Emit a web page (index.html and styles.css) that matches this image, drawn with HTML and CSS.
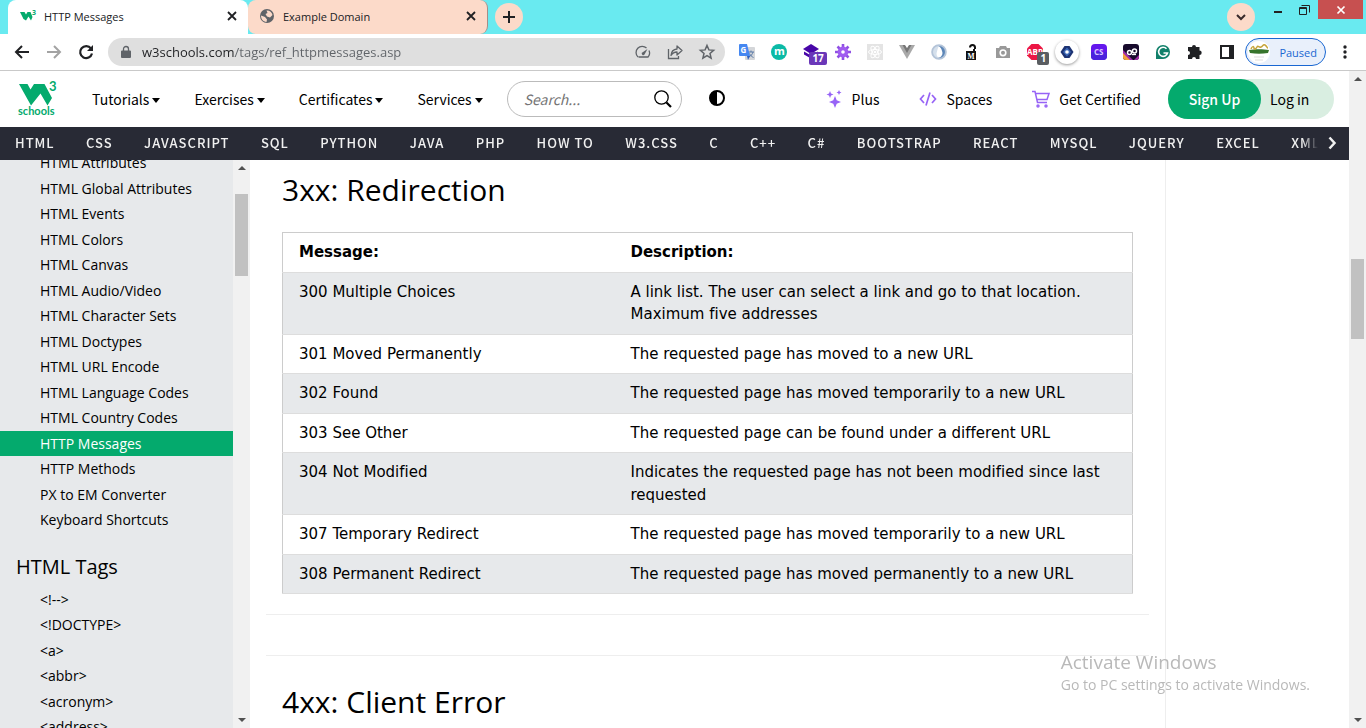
FILE: index.html
```html
<!DOCTYPE html>
<html lang="en">
<head>
<meta charset="utf-8">
<title>HTTP Messages</title>
<link rel="stylesheet" href="styles.css">
</head>
<body>
<div class="tabstrip">
  <div class="tab tab-active">
    <svg class="fav" viewBox="0 0 16 16"><path d="M0 4H4.500L6 6.500 7.500 4H10.500L12.500 9 11 12.500 8.500 8.500 6 12.500 3.500 11Z" fill="#04aa6d"/><text x="12" y="7" font-size="7" font-weight="700" fill="#04aa6d">3</text></svg>
    <span class="tab-title">HTTP Messages</span>
    <button class="icon-btn" aria-label="Close tab"><svg width="10" height="10" viewBox="0 0 10 10"><path d="M1 1l8 8M9 1l-8 8" stroke="#202124" stroke-width="1.800"/></svg></button>
  </div>
  <div class="tab tab-idle">
    <svg class="fav" viewBox="0 0 16 16"><circle cx="8" cy="8" r="7" fill="#5f6368"/><path d="M7.500 2.500C10 2 13 4 13.500 7L11 9.500 8 8.500 6.500 6 8.500 5ZM2 7.500 6 9 8 11.500 7.500 14C4 13.500 2 11 2 7.500Z" fill="#fcdac9"/></svg>
    <span class="tab-title">Example Domain</span>
    <button class="icon-btn" aria-label="Close tab"><svg width="10" height="10" viewBox="0 0 10 10"><path d="M1 1l8 8M9 1l-8 8" stroke="#202124" stroke-width="1.800"/></svg></button>
  </div>
  <button class="round-btn" aria-label="New tab"><svg width="12" height="12" viewBox="0 0 12 12"><path d="M6 0v12M0 6h12" stroke="#202124" stroke-width="2"/></svg></button>
  <button class="round-btn search-tabs" aria-label="Search tabs"><svg width="10" height="7" viewBox="0 0 10 7"><path d="M1 1l4 4 4-4" fill="none" stroke="#3a2a2a" stroke-width="2"/></svg></button>
  <div class="win-btns">
    <button class="win-btn" aria-label="Minimize"><svg width="8" height="12" viewBox="0 0 8 12"><path d="M0 8h8" stroke="#222" stroke-width="2"/></svg></button>
    <button class="win-btn" aria-label="Restore"><svg width="11" height="10" viewBox="0 0 11 10"><path d="M.5 2.500h7v7h-7zM.5 3.500h7M2.500 .5h8v7" fill="none" stroke="#222"/></svg></button>
    <button class="win-btn win-close" aria-label="Close"><svg width="8" height="8" viewBox="0 0 8 8"><path d="M.5 .5l7 7M7.500 .5l-7 7" stroke="#fff" stroke-width="1.700"/></svg></button>
  </div>
</div>

<div class="toolbar">
  <div class="nav-btns">
    <button class="icon-btn" aria-label="Back"><svg width="16" height="16" viewBox="0 0 16 16"><path d="M15 8H2M8 2L2 8l6 6" fill="none" stroke="#202124" stroke-width="2"/></svg></button>
    <button class="icon-btn" aria-label="Forward"><svg width="16" height="16" viewBox="0 0 16 16"><path d="M1 8h13M8 2l6 6-6 6" fill="none" stroke="#a3a3a3" stroke-width="2"/></svg></button>
    <button class="icon-btn" aria-label="Reload"><svg width="16" height="16" viewBox="0 0 16 16"><path d="M13 4.500A6 6 0 1 0 14 9.500" fill="none" stroke="#202124" stroke-width="2.200"/><path d="M15 1v6H9z" fill="#202124"/></svg></button>
  </div>
  <div class="omnibox">
    <svg width="10" height="12" viewBox="0 0 10 12"><path d="M1 4.500h8a1 1 0 0 1 1 1V11a1 1 0 0 1-1 1H1a1 1 0 0 1-1-1V5.500a1 1 0 0 1 1-1z" fill="#5f6368"/><path d="M2.500 5V3a2.500 2.500 0 0 1 5 0v2" fill="none" stroke="#5f6368" stroke-width="1.300"/></svg>
    <input class="url" type="text" aria-label="Address" value="w3schools.com/tags/ref_httpmessages.asp">
    <div class="omni-icons">
      <button class="icon-btn" aria-label="Performance"><svg width="16" height="16" viewBox="0 0 16 16"><path d="M3.500 13h9.500A6 6 0 0 0 14 6.500M11.500 4A6 6 0 0 0 3 13" fill="none" stroke="#5f6368" stroke-width="1.300"/><path d="M12.500 5L9.500 10.500A1.500 1.500 0 1 1 7.300 8.500z" fill="#5f6368"/></svg></button>
      <button class="icon-btn" aria-label="Share"><svg width="16" height="16" viewBox="0 0 16 16"><path d="M1.500 5v9.500h10V12" fill="none" stroke="#5f6368" stroke-width="1.300"/><path d="M10 5V2l5 4.500L10 11V8C7 8 5.500 9 4 11.500 4.300 7.500 6.500 5.300 10 5z" fill="none" stroke="#5f6368" stroke-width="1.300" stroke-linejoin="round"/></svg></button>
      <button class="icon-btn" aria-label="Bookmark"><svg width="16" height="16" viewBox="0 0 16 16"><path d="M8 1.500l1.900 4.400 4.700.4-3.600 3.100 1.100 4.700L8 11.600 3.900 14.100 5 9.400 1.400 6.300l4.700-.4z" fill="none" stroke="#5f6368" stroke-width="1.500"/></svg></button>
    </div>
  </div>
  <div class="extensions">
    <button class="icon-btn" aria-label="Translate"><svg width="16" height="16" viewBox="0 0 16 16"><rect x="6" y="3" width="10" height="13" rx="1" fill="#d4d6d9"/><path d="M9 8h6M12 6.500V8M14 8c-.5 2-2 4-4 5M10.500 9.500c1 2 2 3 4 4" stroke="#5b7aa8" fill="none"/><path d="M1 0h7l3 12H1a1 1 0 0 1-1-1V1a1 1 0 0 1 1-1z" fill="#4688f1"/><path d="M8 12h3l-2 4z" fill="#2b5fc0"/><text x="1.500" y="9" font-size="8" font-weight="700" fill="#fff">G</text></svg></button>
    <button class="icon-btn" aria-label="Mate"><svg width="16" height="16" viewBox="0 0 16 16"><circle cx="8" cy="8" r="8" fill="#0bbaa6"/><text x="3" y="11" font-size="11" font-weight="700" fill="#fff">m</text></svg></button>
    <button class="icon-btn badge-host" aria-label="Layers, 17"><svg width="16" height="16" viewBox="0 0 16 16"><path d="M8 0l8 5-8 5-8-5z" fill="#4806a8"/><path d="M1 7.500l7 4 7-4v3l-7 4-7-4z" fill="#4806a8"/></svg><span class="badge badge-purple">17</span></button>
    <button class="icon-btn" aria-label="Gear"><svg width="16" height="16" viewBox="0 0 16 16"><path d="M8 0v16M0 8h16M2.500 2.500l11 11M13.500 2.500l-11 11" stroke="#9050e4" stroke-width="2.600"/><circle cx="8" cy="8" r="3.600" fill="#fff" stroke="#a05cf0" stroke-width="3.600"/></svg></button>
    <button class="icon-btn" aria-label="React"><svg width="16" height="16" viewBox="0 0 16 16"><rect width="16" height="16" fill="#e4e4e4"/><g fill="none" stroke="#fff"><ellipse cx="8" cy="8" rx="6.500" ry="2.500"/><ellipse cx="8" cy="8" rx="6.500" ry="2.500" transform="rotate(60 8 8)"/><ellipse cx="8" cy="8" rx="6.500" ry="2.500" transform="rotate(120 8 8)"/></g><circle cx="8" cy="8" r="1.300" fill="#fff"/></svg></button>
    <button class="icon-btn" aria-label="Vue"><svg width="16" height="16" viewBox="0 0 16 16"><path d="M0 1h16L8 15z" fill="#a9a9a9"/><path d="M3.500 1h3L8 4l1.500-3h3L8 9z" fill="#777"/><path d="M6 1h4L8 4z" fill="#fff"/></svg></button>
    <button class="icon-btn" aria-label="Orbit"><svg width="16" height="16" viewBox="0 0 16 16"><circle cx="8" cy="8" r="6.500" fill="none" stroke="#b4c4d8" stroke-width="2.600"/><path d="M8 2a6 6 0 0 1 0 12c3.500-2 4-4.500 3-7C10.500 5 9.500 3.500 8 2z" fill="#5c86b8"/><path d="M8 2a6 6 0 0 0 0 12c-2.500-1.500-3-4-2-6.500C6.500 5.500 7 3.500 8 2z" fill="#d5e0ec"/></svg></button>
    <button class="icon-btn" aria-label="Unlock"><svg width="16" height="16" viewBox="0 0 16 16"><rect x="3" y="7" width="10" height="9" fill="#111"/><path d="M12 5V3.500a2.500 2.500 0 0 0-5 0M11 8V5" fill="none" stroke="#111" stroke-width="2"/><text class="serif" x="4.500" y="14.500" font-size="7.500" font-weight="700" fill="#fff">M</text></svg></button>
    <button class="icon-btn" aria-label="Camera"><svg width="16" height="16" viewBox="0 0 16 16"><path d="M1 4h3l1-2h6l1 2h3v10H1z" fill="#999"/><circle cx="8" cy="8.800" r="2.800" fill="none" stroke="#fff" stroke-width="1.600"/></svg></button>
    <button class="icon-btn badge-host" aria-label="Ad blocker, 1"><svg width="16" height="16" viewBox="0 0 16 16"><path d="M4.500 0h7L16 4.500v7L11.500 16h-7L0 11.500v-7z" fill="#ec1745"/><text x="0" y="11" font-size="8" font-weight="700" fill="#fff">ABP</text></svg><span class="badge badge-gray">1</span></button>
    <button class="icon-btn disc" aria-label="Wallet"><svg width="14" height="14" viewBox="0 0 14 14"><path d="M4.500 1h5L13.500 7l-4 6h-5L.5 7z" fill="#1d3373"/><path d="M7 2.500l4 4.500-4 4.500L3 7z" fill="#3b68b8"/><circle cx="7" cy="7" r="1.800" fill="#fff"/></svg></button>
    <button class="icon-btn" aria-label="CS"><svg width="16" height="16" viewBox="0 0 16 16"><rect width="16" height="16" rx="4" fill="#6417ed"/><path d="M0 8h16v4a4 4 0 0 1-4 4H4a4 4 0 0 1-4-4z" fill="#4b22dd"/><text x="3" y="11" font-size="8" font-weight="700" fill="#d9c7ff">CS</text></svg></button>
    <button class="icon-btn" aria-label="Capture"><svg width="16" height="16" viewBox="0 0 16 16"><rect width="16" height="16" rx="3" fill="#170a2c"/><path d="M0 8l8 8H3a3 3 0 0 1-3-3z" fill="#f3a13c"/><path d="M0 6l10 10H7L0 9zM16 11l-5 5h2a3 3 0 0 0 3-3z" fill="#a12ca8"/><circle cx="6.500" cy="8.500" r="2" fill="none" stroke="#fff" stroke-width="1.500"/><circle cx="11.500" cy="7" r="2" fill="none" stroke="#fff" stroke-width="1.500"/><path d="M9 10.500h4" stroke="#fff" stroke-width="1.300"/></svg></button>
    <button class="icon-btn" aria-label="Writing assistant"><svg width="16" height="16" viewBox="0 0 16 16"><path d="M1 15V8a7 7 0 1 1 7 7z" fill="#11806a"/><path d="M11.500 4.800A4.500 4.500 0 1 0 12.500 9H8.500" fill="none" stroke="#fff" stroke-width="1.600"/></svg></button>
    <button class="icon-btn" aria-label="Extensions"><svg width="16" height="16" viewBox="0 0 16 16"><path d="M5 3a2 2 0 0 1 4 0h3.500v3.500a2.200 2.200 0 0 1 0 4.400V15H9a2 2 0 0 0-4 0H1v-4a2 2 0 0 0 0-4V3z" fill="#202124"/></svg></button>
    <button class="icon-btn" aria-label="Side panel"><svg width="16" height="16" viewBox="0 0 16 16"><path d="M2 2h12v12H2z" fill="#fff" stroke="#202124" stroke-width="2"/><path d="M10 2h4v12h-4z" fill="#202124"/></svg></button>
  </div>
  <button class="profile"><svg width="22" height="22" viewBox="0 0 22 22"><circle cx="11" cy="11" r="11" fill="#fff"/><path d="M1 9c6-1 14-1 20 0l-1 3c-6 1-12 1-18 0z" fill="#36742c"/><path d="M3 8c1-3 3-3 3-1s2 1 3-1 2 1 4 0 2-3 4-2 2 3 3 3" fill="none" stroke="#c6a43a" stroke-width="1.500"/><path d="M6 16h10M7 19h8" stroke="#ddd"/></svg>Paused</button>
  <button class="icon-btn" aria-label="Menu"><svg width="4" height="14" viewBox="0 0 4 14" fill="#202124"><circle cx="2" cy="2" r="1.700"/><circle cx="2" cy="7" r="1.700"/><circle cx="2" cy="12" r="1.700"/></svg></button>
</div>

<div class="viewport">
  <div class="page">
    <header class="site-head">
      <a class="logo" href="#" aria-label="W3Schools home"><svg width="42" height="42" viewBox="0 0 42 42" fill="#04aa6d"><path d="M1 6H9.500L12.500 11.500 16 6H26.500L34 20 29.500 27.500 22.500 15.500 13 27.500Z"/><text class="logo-three" x="31" y="13">3</text><text class="logo-name" x="0" y="37">schools</text></svg></a>
      <nav class="menu">
        <button class="menu-btn">Tutorials<i class="caret"></i></button>
        <button class="menu-btn">Exercises<i class="caret"></i></button>
        <button class="menu-btn">Certificates<i class="caret"></i></button>
        <button class="menu-btn">Services<i class="caret"></i></button>
      </nav>
      <div class="search">
        <input type="text" placeholder="Search..." aria-label="Search">
        <button class="icon-btn" aria-label="Search"><svg width="18" height="18" viewBox="0 0 18 18"><circle cx="7.500" cy="7.500" r="6.700" fill="none" stroke="#000" stroke-width="1.300"/><path d="M12.500 12.500l4.500 4.500" stroke="#000" stroke-width="2.200"/></svg></button>
      </div>
      <button class="icon-btn contrast" aria-label="Toggle dark mode"><svg width="16" height="16" viewBox="0 0 16 16"><circle cx="8" cy="8" r="7" fill="#fff" stroke="#000" stroke-width="2"/><path d="M8 1a7 7 0 0 0 0 14z"/></svg></button>
      <div class="head-right">
        <a href="#"><svg width="17" height="18" viewBox="0 0 17 18" fill="#9763f6"><path d="M9 6l1.700 4.300L15 12l-4.300 1.700L9 18l-1.700-4.300L3 12l4.300-1.700zM4 1l1 2.500L7.500 4.500 5 5.500 4 8 3 5.500.5 4.500 3 3.500zM13 0l.8 1.700 1.700.8-1.700.8L13 5l-.8-1.700-1.700-.8 1.700-.8z"/></svg>Plus</a>
        <a href="#"><svg width="18" height="16" viewBox="0 0 18 16" fill="none" stroke="#9763f6" stroke-width="1.700"><path d="M5 4L1.500 8 5 12M13 4l3.500 4L13 12M11 1.500L7 14.500"/></svg>Spaces</a>
        <a href="#"><svg width="18" height="18" viewBox="0 0 18 18" fill="none" stroke="#9763f6" stroke-width="1.500"><path d="M0 1.500h3l2.500 11H15M3.500 3.500H17L15 9.500H5"/><circle cx="6" cy="16" r="1"/><circle cx="14" cy="16" r="1"/></svg>Get Certified</a>
      </div>
      <div class="auth"><a class="signup" href="#">Sign Up</a><a class="login" href="#">Log in</a></div>
    </header>

    <nav class="topics">
      <div class="topic-list">
        <a href="#">HTML</a><a href="#">CSS</a><a href="#">JAVASCRIPT</a><a href="#">SQL</a><a href="#">PYTHON</a><a href="#">JAVA</a><a href="#">PHP</a><a href="#">HOW TO</a><a href="#">W3.CSS</a><a href="#">C</a><a href="#">C++</a><a href="#">C#</a><a href="#">BOOTSTRAP</a><a href="#">REACT</a><a href="#">MYSQL</a><a href="#">JQUERY</a><a href="#">EXCEL</a><a href="#">XML</a>
      </div>
      <button class="scroll-right" aria-label="Scroll right"><svg width="9" height="12" viewBox="0 0 9 12"><path d="M1.500 0.500l5 5.500-5 5.500" fill="none" stroke="#f1f1f1" stroke-width="2.500"/></svg></button>
    </nav>

    <div class="columns">
      <aside class="sidebar">
        <div class="side-list">
          <ul class="refs">
            <li><a href="#">HTML Attributes</a></li>
            <li><a href="#">HTML Global Attributes</a></li>
            <li><a href="#">HTML Events</a></li>
            <li><a href="#">HTML Colors</a></li>
            <li><a href="#">HTML Canvas</a></li>
            <li><a href="#">HTML Audio/Video</a></li>
            <li><a href="#">HTML Character Sets</a></li>
            <li><a href="#">HTML Doctypes</a></li>
            <li><a href="#">HTML URL Encode</a></li>
            <li><a href="#">HTML Language Codes</a></li>
            <li><a href="#">HTML Country Codes</a></li>
            <li><a class="current" href="#">HTTP Messages</a></li>
            <li><a href="#">HTTP Methods</a></li>
            <li><a href="#">PX to EM Converter</a></li>
            <li><a href="#">Keyboard Shortcuts</a></li>
          </ul>
          <h2>HTML Tags</h2>
          <ul>
            <li><a href="#">&lt;!--&gt;</a></li>
            <li><a href="#">&lt;!DOCTYPE&gt;</a></li>
            <li><a href="#">&lt;a&gt;</a></li>
            <li><a href="#">&lt;abbr&gt;</a></li>
            <li><a href="#">&lt;acronym&gt;</a></li>
            <li><a href="#">&lt;address&gt;</a></li>
          </ul>
        </div>
        <div class="scrollbar"><i class="arrow up"></i><i class="thumb side-thumb"></i><i class="arrow down"></i></div>
      </aside>

      <main class="content">
        <section>
          <h2>3xx: Redirection</h2>
          <table>
            <thead><tr><th>Message:</th><th>Description:</th></tr></thead>
            <tbody>
              <tr><td>300 Multiple Choices</td><td>A link list. The user can select a link and go to that location. Maximum five addresses</td></tr>
              <tr><td>301 Moved Permanently</td><td>The requested page has moved to a new URL</td></tr>
              <tr><td>302 Found</td><td>The requested page has moved temporarily to a new URL</td></tr>
              <tr><td>303 See Other</td><td>The requested page can be found under a different URL</td></tr>
              <tr><td>304 Not Modified</td><td>Indicates the requested page has not been modified since last requested</td></tr>
              <tr><td>307 Temporary Redirect</td><td>The requested page has moved temporarily to a new URL</td></tr>
              <tr><td>308 Permanent Redirect</td><td>The requested page has moved permanently to a new URL</td></tr>
            </tbody>
          </table>
        </section>
        <hr>
        <hr class="second">
        <section><h2>4xx: Client Error</h2></section>
      </main>
      <div class="rail"></div>
    </div>
  </div>
  <div class="scrollbar"><i class="arrow up"></i><i class="thumb page-thumb"></i><i class="arrow down"></i></div>
</div>

<div class="watermark"><p class="wm-title">Activate Windows</p><p class="wm-text">Go to PC settings to activate Windows.</p></div>
</body>
</html>
```
FILE: styles.css
```css
* { box-sizing: border-box; }
body {
  margin: 0;
  height: 100vh;
  display: flex;
  flex-direction: column;
  overflow: hidden;
  background: #fff;
  color: #000;
  font-family: "Open Sans", "Noto Sans", sans-serif;
}
button, input { font: inherit; color: inherit; border: 0; background: none; padding: 0; margin: 0; }
a { color: inherit; text-decoration: none; }
svg { display: block; flex: none; overflow: visible; }
ul, h2, p { margin: 0; padding: 0; }
li { list-style: none; }
.icon-btn { display: flex; align-items: center; justify-content: center; flex: none; }
.serif { font-family: "Liberation Serif", serif; }

/* Browser tabs */
.tabstrip { display: flex; align-items: center; height: 34px; flex: none; padding-left: 8px; background: #69eaf0; }
.tab { display: flex; align-items: center; height: 34px; width: 240px; padding: 0 11px 2px 12px; font-size: 11px; color: #202124; }
.tab-active { background: #fff; border-radius: 8px 8px 0 0; }
.tab-idle { background: #fcdac9; border-radius: 8px; border-right: 1px solid #a58e88; padding-left: 11px; }
.fav { width: 16px; height: 16px; margin-right: 8px; }
.tab-title { flex: 1; }
.round-btn { display: flex; align-items: center; justify-content: center; width: 28px; height: 28px; margin-left: 7px; border-radius: 50%; background: #fcdac9; }
.search-tabs { margin-left: auto; }
.win-btns { display: flex; align-self: flex-start; margin: 0 3px 0 9px; }
.win-btn { display: flex; align-items: center; justify-content: center; width: 27px; height: 19px; }
.win-close { width: 45px; background: #c75050; }

/* Browser toolbar */
.toolbar { display: flex; align-items: center; height: 37px; flex: none; padding: 0 19px 0 14px; border-bottom: 1px solid #c9c9c9; }
.nav-btns { display: flex; gap: 16px; }
.omnibox { display: flex; align-items: center; flex: 1; height: 28px; margin-left: 14px; padding: 0 10px 0 13px; border-radius: 14px; background: #dfdfdf; }
.url {
  flex: 1;
  min-width: 0;
  height: 28px;
  margin-left: 11px;
  font-size: 13px;
  color: transparent;
  background: linear-gradient(to right, #202124 93px, #5f6368 93px) text;
}
.omni-icons { display: flex; gap: 16px; }
.extensions { display: flex; gap: 16px; margin-left: 14px; }
.badge-host { position: relative; }
.badge { position: absolute; left: 6px; top: 8px; padding: 0 3px; border-radius: 2px; font-size: 10px; line-height: 13px; font-weight: 700; color: #fff; }
.badge-purple { background: #6a37b8; }
.badge-gray { left: 10px; background: #5a5d61; }
.disc { width: 24px; height: 24px; margin: -4px; border-radius: 50%; box-shadow: 0 1px 3px #999; }
.profile { display: flex; align-items: center; gap: 9px; height: 28px; margin: 0 17px 0 10px; padding: 0 8px 0 2px; border: 1px solid #1967d2; border-radius: 14px; background: #e9f0fb; color: #1967d2; font-size: 11px; }

/* Page frame */
.viewport { display: flex; flex: 1; min-height: 0; }
.page { display: flex; flex-direction: column; flex: 1; min-width: 0; }
.scrollbar { position: relative; flex: none; width: 17px; background: #f1f1f1; }
.arrow { position: absolute; left: 5px; border: 4px solid transparent; }
.up { top: 2px; border-bottom-color: #505050; }
.down { bottom: 2px; border-top-color: #505050; }
.thumb { position: absolute; left: 2px; right: 2px; background: #c1c1c1; }
.side-thumb { top: 34px; height: 82px; }
.page-thumb { top: 188px; height: 80px; }

/* Site header */
.site-head { display: flex; align-items: center; height: 56px; flex: none; padding: 0 15px 0 18px; font-family: "Noto Sans CJK SC", sans-serif; font-size: 14px; }
.logo-three { font: 700 13px Lato, sans-serif; }
.logo-name { font: 700 11px Lato, sans-serif; }
.menu { display: flex; gap: 34px; margin-left: 32px; }
.menu-btn { display: flex; align-items: center; white-space: nowrap; }
.caret { margin: 3px 0 0 3px; border: 4px solid transparent; border-top: 5px solid #000; border-bottom: 0; }
.search { display: flex; align-items: center; width: 175px; height: 36px; margin-left: 24px; padding: 0 9px 0 16px; border: 1px solid #bbb; border-radius: 18px; }
.search input { flex: 1; min-width: 0; font-style: italic; outline: 0; }
.search input::placeholder { color: #757575; opacity: 1; }
.contrast { margin: 0 0 3px 27px; }
.head-right { display: flex; gap: 40px; margin-left: auto; }
.head-right a { display: flex; align-items: center; gap: 9px; white-space: nowrap; }
.auth { display: flex; width: 166px; height: 40px; margin-left: 27px; border-radius: 20px; background: #d9eee1; line-height: 40px; }
.signup { width: 93px; border-radius: 20px; background: #04aa6d; color: #fff; text-align: center; font-weight: 500; }
.login { padding-left: 9px; }

/* Topic bar */
.topics { display: flex; align-items: center; height: 33px; flex: none; padding-bottom: 2px; background: #282a35; color: #f1f1f1; font: 500 13px/31px "Noto Sans CJK SC", sans-serif; letter-spacing: 1px; }
.topic-list { display: flex; justify-content: space-between; flex: 1; min-width: 0; overflow: hidden; mask-image: linear-gradient(to left, transparent 2px, #000 18px); }
.topic-list a { padding: 0 15px; white-space: nowrap; flex: none; }
.topic-list a:last-child { margin-right: -15px; }
.scroll-right { padding: 0 12px 0 8px; }

/* Columns */
.columns { display: flex; flex: 1; min-height: 0; overflow: hidden; }
.sidebar { display: flex; flex: none; width: 250px; min-height: 0; background: #e7e9eb; }
.side-list { flex: 1; overflow: hidden; }
.side-list .refs { margin-top: -10px; }
.side-list li { font-size: 17px; line-height: 1.5em; }
.side-list li a { display: block; padding-left: 40px; font-size: 14px; }
.side-list .current { background: #04aa6d; color: #fff; }
.side-list h2 { margin: 19px 0 5px; padding-left: 16px; font-size: 20px; font-weight: 400; line-height: 30px; }

.content { flex: 1; min-width: 0; padding: 0 16px; overflow: hidden; }
.content section { padding: 0 16px; }
.content h2 { padding: 8px 0 20px; font-size: 30px; font-weight: 400; line-height: 44px; }
table { width: 100%; border-collapse: collapse; border: 1px solid #ccc; font: 15px/1.5 "DejaVu Sans", sans-serif; font-variant-ligatures: none; }
tr { border-bottom: 1px solid #ddd; }
tbody tr:nth-child(odd) { background: #e7e9eb; }
th, td { padding: 8px; text-align: left; vertical-align: top; }
th:first-child, td:first-child { width: 40%; padding-left: 16px; }
hr { margin: 20px 0; border: 0; border-top: 1px solid #eee; }
.second { margin: 40px 0 16px; }
.rail { flex: none; width: 184px; border-left: 1px solid #eee; }

/* Desktop overlay */
.watermark { position: fixed; right: 56px; bottom: 33px; color: #b9b9b9; pointer-events: none; }
.wm-title { font-size: 19px; line-height: 25px; }
.wm-text { font-size: 14px; line-height: 20px; }
```
